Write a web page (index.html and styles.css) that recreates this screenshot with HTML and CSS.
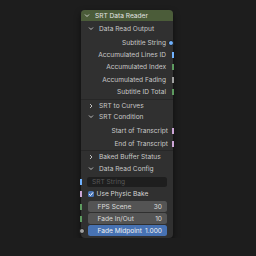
FILE: index.html
```html
<!DOCTYPE html>
<html lang="en">
<head>
  <meta charset="UTF-8">
  <title>SRT Data Reader</title>
  <link rel="stylesheet" href="styles.css">
</head>
<body>
  <div class="node">
    <div class="node-header">
      <svg class="chev" width="10" height="6" viewBox="0 0 10 6"><path d="M3 1.5 L5 3.5 L7 1.5" fill="none" stroke="#d8d8d8" stroke-width="0.9"/></svg>
      SRT Data Reader
    </div>

    <div class="panel-head first">
      <svg class="chev" width="10" height="6" viewBox="0 0 10 6"><path d="M3 1.5 L5 3.5 L7 1.5" fill="none" stroke="#cfcfcf" stroke-width="0.9"/></svg>
      Data Read Output
    </div>
    <div class="outputs">
      <div class="out-row">Subtitle String<span class="sock circle string"></span></div>
      <div class="out-row">Accumulated Lines ID<span class="sock bar string"></span></div>
      <div class="out-row">Accumulated Index<span class="sock bar int"></span></div>
      <div class="out-row">Accumulated Fading<span class="sock bar float"></span></div>
      <div class="out-row">Subtitle ID Total<span class="sock bar int"></span></div>
    </div>

    <div class="panel-head sep">
      <svg class="chev" width="10" height="6" viewBox="0 0 10 6"><path d="M4 1 L6 3 L4 5" fill="none" stroke="#cfcfcf" stroke-width="0.9"/></svg>
      SRT to Curves
    </div>
    <div class="panel-head">
      <svg class="chev" width="10" height="6" viewBox="0 0 10 6"><path d="M3 1.5 L5 3.5 L7 1.5" fill="none" stroke="#cfcfcf" stroke-width="0.9"/></svg>
      SRT Condition
    </div>
    <div class="outputs cond">
      <div class="out-row">Start of Transcript<span class="sock bar bool"></span></div>
      <div class="out-row">End of Transcript<span class="sock bar bool"></span></div>
    </div>

    <div class="panel-head sep">
      <svg class="chev" width="10" height="6" viewBox="0 0 10 6"><path d="M4 1 L6 3 L4 5" fill="none" stroke="#cfcfcf" stroke-width="0.9"/></svg>
      Baked Buffer Status
    </div>
    <div class="panel-head">
      <svg class="chev" width="10" height="6" viewBox="0 0 10 6"><path d="M3 1.5 L5 3.5 L7 1.5" fill="none" stroke="#cfcfcf" stroke-width="0.9"/></svg>
      Data Read Config
    </div>
    <div class="inputs">
      <div class="in-row">
        <span class="sock bar string left"></span>
        <div class="text-field">SRT String</div>
      </div>
      <div class="in-row">
        <span class="sock bar bool left"></span>
        <span class="checkbox">
          <svg width="6" height="6" viewBox="0 0 6 6"><path d="M1 3.1 L2.5 4.5 L5 1.4" fill="none" stroke="#fff" stroke-width="1"/></svg>
        </span>
        <span class="check-label">Use Physic Bake</span>
      </div>
      <div class="num-col">
        <div class="in-row">
          <span class="sock bar int left"></span>
          <div class="num-field"><span>FPS Scene</span><span>30</span></div>
        </div>
        <div class="in-row">
          <span class="sock bar int left"></span>
          <div class="num-field"><span>Fade In/Out</span><span>10</span></div>
        </div>
        <div class="in-row">
          <span class="sock circle float left"></span>
          <div class="num-field active"><span>Fade Midpoint</span><span>1.000</span></div>
        </div>
      </div>
    </div>
  </div>
</body>
</html>
```

FILE: styles.css
```css
body {
  margin: 0;
  padding: 10px 0 0 0;
  background: #1d1d1d;
  font-family: 'Inter', 'DejaVu Sans', sans-serif;
  font-size: 6.6px;
  color: #c8c8c8;
}

.node {
  width: 92px;
  margin-left: 81px;
  background: #303030;
  border-radius: 4px;
  padding-bottom: 2px;
  box-shadow: 0 3px 6px rgba(0, 0, 0, 0.55);
}

.node-header {
  height: 11px;
  background: #4b5c39;
  border-radius: 4px 4px 0 0;
  padding-left: 1px;
  color: #e4e4e4;
  display: flex;
  align-items: center;
}

.chev {
  flex: none;
  margin-right: 3px;
}

.node-header .chev {
  margin-right: 3px;
}

.panel-head {
  height: 11.5px;
  display: flex;
  align-items: center;
  padding-left: 5px;
}

.panel-head.first {
  height: 13px;
  margin-top: 1px;
}

.panel-head.sep {
  border-top: 1px solid #272727;
}

.outputs {
  padding: 1.5px 0 1px 0;
}

.cond {
  padding-top: 2px;
  padding-bottom: 0.5px;
}

.out-row {
  position: relative;
  height: 12.3px;
  display: flex;
  align-items: center;
  justify-content: flex-end;
  padding-right: 7px;
}

.cond .out-row {
  height: 12.5px;
  padding-right: 5px;
}

.sock {
  position: absolute;
  right: -1px;
  top: 50%;
}

.sock.circle {
  width: 4px;
  height: 4px;
  margin-top: -2.5px;
  border-radius: 50%;
  border: 0.5px solid #1a1a1a;
}

.sock.bar {
  width: 2px;
  height: 6px;
  margin-top: -3px;
}

.sock.left {
  right: auto;
  left: -1px;
}

.sock.circle.left {
  left: -2.5px;
}

.string { background: #70b2ff; }
.int { background: #5d9a5f; }
.float { background: #a1a1a1; }
.bool { background: #cca6d6; }

.inputs {
  padding: 1.5px 6px 0 6px;
}

.in-row {
  position: relative;
  display: flex;
  align-items: center;
  height: 12px;
}

.inputs > .in-row .sock.left,
.num-col .sock.left {
  left: -7px;
}

.inputs > .in-row .sock.circle.left,
.num-col .sock.circle.left {
  left: -8.5px;
}

.text-field {
  flex: 1;
  height: 10px;
  line-height: 10px;
  background: #1e1e1e;
  border-radius: 2.5px;
  color: #585858;
  padding-left: 5px;
}

.checkbox {
  width: 6px;
  height: 6px;
  margin-left: 1px;
  background: #4772b3;
  border-radius: 1.5px;
  display: flex;
}

.check-label {
  margin-left: 2.5px;
  color: #d6d6d6;
}

.num-col {
  display: flex;
  flex-direction: column;
  gap: 1.5px;
  margin-top: 1.5px;
}

.num-col .in-row {
  height: 10.5px;
}

.num-field {
  flex: 1;
  height: 10.5px;
  margin-left: 0.5px;
  background: #545454;
  border-radius: 2.5px;
  display: flex;
  align-items: center;
  justify-content: space-between;
  padding: 0 5px 0 10px;
  color: #dcdcdc;
}

.num-field.active {
  background: #4772b3;
  color: #f0f0f0;
}
```
